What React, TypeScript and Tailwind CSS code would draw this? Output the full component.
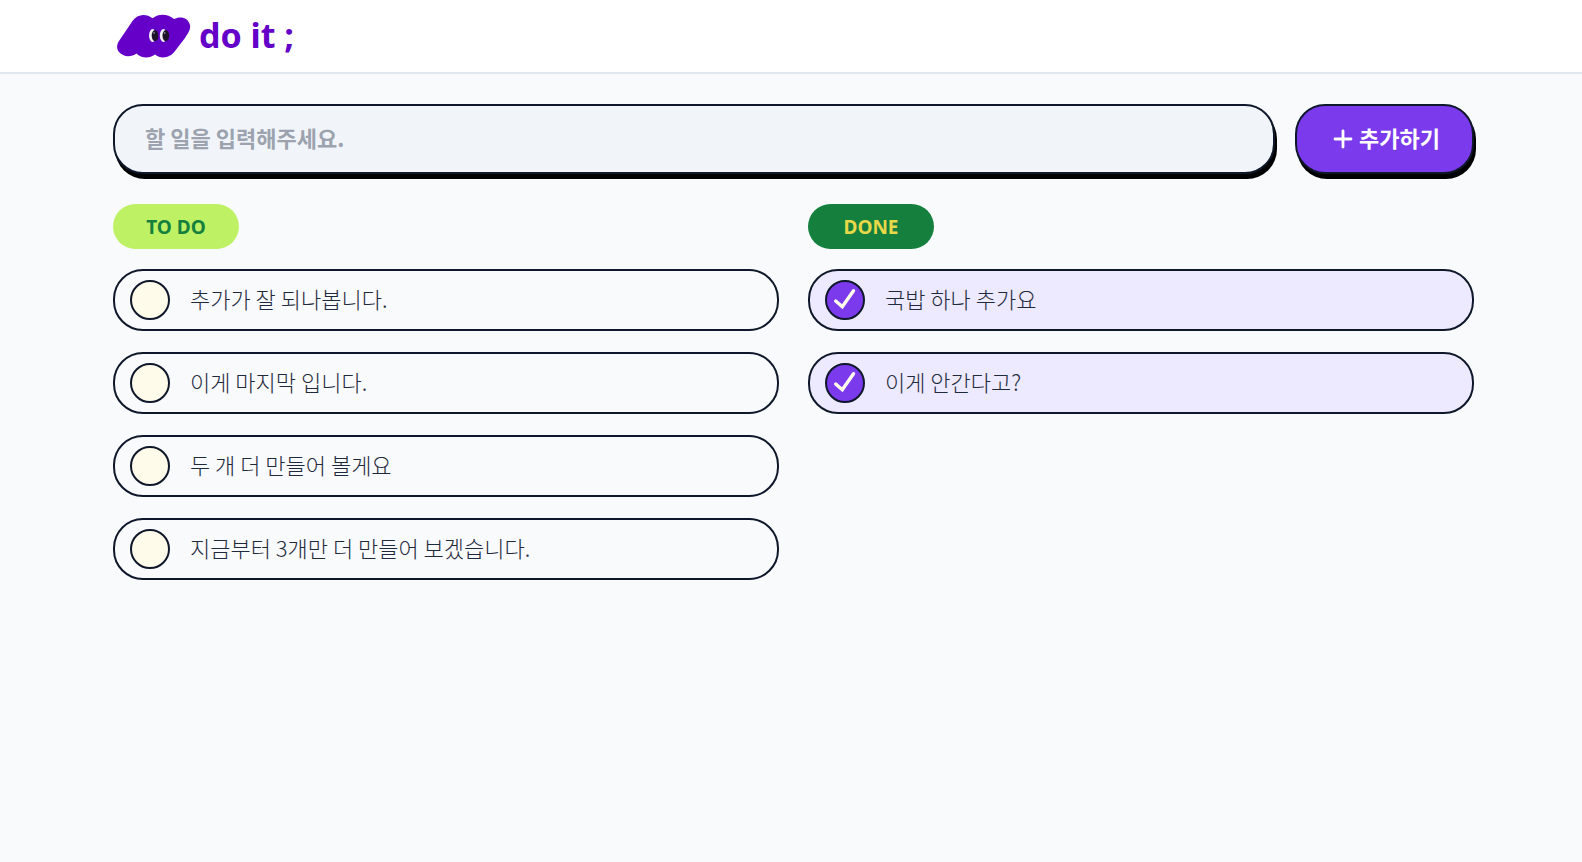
import { useState, type FormEvent } from "react";

type Item = { id: number; name: string; done: boolean };

const initialItems: Item[] = [
  { id: 1, name: "추가가 잘 되나봅니다.", done: false },
  { id: 2, name: "이게 마지막 입니다.", done: false },
  { id: 3, name: "두 개 더 만들어 볼게요", done: false },
  { id: 4, name: "지금부터 3개만 더 만들어 보겠습니다.", done: false },
  { id: 5, name: "국밥 하나 추가요", done: true },
  { id: 6, name: "이게 안간다고?", done: true },
];

function Mascot() {
  return (
    <svg width="74" height="44" viewBox="0 0 74 44" aria-hidden="true">
      <path
        d="M2 27 L15.5 7 C20 0 29 -1 35.7 4.3 C42 -1 51 0 57 5 C63 2 71 3 73 11 C74 16 70 21 68 24 L58 37 C53 44 44 45.500 38 40.500 C32 45 24 44 19.500 39.500 C14 43.500 6 43 2 38 C-1 34 0 30 2 27 Z"
        fill="#6400c8"
      />
      <ellipse cx="35.6" cy="21.5" rx="3.6" ry="6.4" fill="#f1eef6" />
      <ellipse cx="46.4" cy="21.5" rx="3.6" ry="6.4" fill="#f1eef6" />
      <ellipse cx="38" cy="21.6" rx="3.3" ry="5.6" fill="#1c1328" />
      <ellipse cx="48.8" cy="21.6" rx="3.3" ry="5.6" fill="#1c1328" />
      <circle cx="37" cy="19" r="0.8" fill="#b9b2c8" />
      <circle cx="47.8" cy="19" r="0.8" fill="#b9b2c8" />
    </svg>
  );
}

function TodoRow({ item, onToggle }: { item: Item; onToggle: () => void }) {
  return (
    <li>
      <label
        className={`flex h-[62px] cursor-pointer items-center gap-5 rounded-[30px] border-2 border-[#0f172a] px-[15px] ${
          item.done ? "bg-[#ede9fe]" : "bg-[#f8fafc]"
        }`}
      >
        <span className="grid size-10 shrink-0">
          <input
            type="checkbox"
            checked={item.done}
            onChange={onToggle}
            className="col-start-1 row-start-1 size-10 appearance-none rounded-full border-2 border-[#0f172a] bg-[#fffbeb] checked:bg-[#7c3aed]"
          />
          {item.done && (
            <svg
              className="pointer-events-none col-start-1 row-start-1 size-10"
              viewBox="0 0 40 40"
              fill="none"
              stroke="#fffbeb"
              strokeWidth="3.4"
              strokeLinecap="round"
              aria-hidden="true"
            >
              <path d="M10.700 21 L17.300 26.800 L28.500 10.700" />
            </svg>
          )}
        </span>
        <span className="pb-1 text-[22px] leading-8 font-light text-[#1e293b]">{item.name}</span>
      </label>
    </li>
  );
}

export default function App() {
  const [items, setItems] = useState(initialItems);
  const [text, setText] = useState("");

  const toggle = (id: number) =>
    setItems((list) => list.map((i) => (i.id === id ? { ...i, done: !i.done } : i)));

  const add = (e: FormEvent) => {
    e.preventDefault();
    const name = text.trim();
    if (!name) return;
    setItems((list) => [...list, { id: Date.now(), name, done: false }]);
    setText("");
  };

  return (
    <div className="min-h-screen bg-[#f8fafc] font-['Noto_Sans_CJK_KR',sans-serif]">
      <header className="border-b-2 border-[#e2e8f0] bg-white pr-[108px] pl-[113px]">
        <a href="/" className="flex h-[72px] w-fit items-center gap-2 pl-1">
          <Mascot />
          <span className="pb-0.5 font-['Noto_Sans',sans-serif] text-[34px] leading-10 font-bold text-[#6400c8]">
            do it ;
          </span>
        </a>
      </header>
      <main className="pt-[30px] pr-[108px] pl-[113px]">
        <form onSubmit={add} className="flex gap-5">
          <input
            type="text"
            aria-label="할 일"
            value={text}
            onChange={(e) => setText(e.target.value)}
            placeholder="할 일을 입력해주세요."
            className="h-[70px] min-w-0 flex-1 rounded-[30px] border-2 border-[#0f172a] bg-[#f1f5f9] px-[30px] pb-1 text-[22px] font-bold text-[#1e293b] shadow-[2px_5px_0_0_#000] outline-none placeholder:text-[#9ca3af]"
          />
          <button
            type="submit"
            className="flex h-[70px] w-[179px] items-center justify-center gap-1.5 rounded-[30px] border-2 border-[#0f172a] bg-[#7c3aed] pl-1 text-[22px] font-bold text-white shadow-[2px_5px_0_0_#000]"
          >
            <svg width="20" height="20" viewBox="0 0 20 20" stroke="currentColor" strokeWidth="2.8" strokeLinecap="round" aria-hidden="true">
              <path d="M10 2 V18 M2 10 H18" />
            </svg>
            <span className="pb-1">추가하기</span>
          </button>
        </form>
        <div className="grid grid-cols-2 gap-[29px] pt-[30px]">
          <section>
            <h2 className="flex h-[45px] w-[126px] items-center justify-center rounded-full bg-[#bef264] pt-0.5 font-['Noto_Sans',sans-serif] text-[19px] font-bold text-[#15803d]">
              TO DO
            </h2>
            <ul className="flex flex-col gap-[21px] pt-5">
              {items.filter((i) => !i.done).map((i) => (
                <TodoRow key={i.id} item={i} onToggle={() => toggle(i.id)} />
              ))}
            </ul>
          </section>
          <section>
            <h2 className="flex h-[45px] w-[126px] items-center justify-center rounded-full bg-[#15803d] pt-0.5 font-['Noto_Sans',sans-serif] text-[19px] font-bold text-[#e8d84a]">
              DONE
            </h2>
            <ul className="flex flex-col gap-[21px] pt-5">
              {items.filter((i) => i.done).map((i) => (
                <TodoRow key={i.id} item={i} onToggle={() => toggle(i.id)} />
              ))}
            </ul>
          </section>
        </div>
      </main>
    </div>
  );
}
